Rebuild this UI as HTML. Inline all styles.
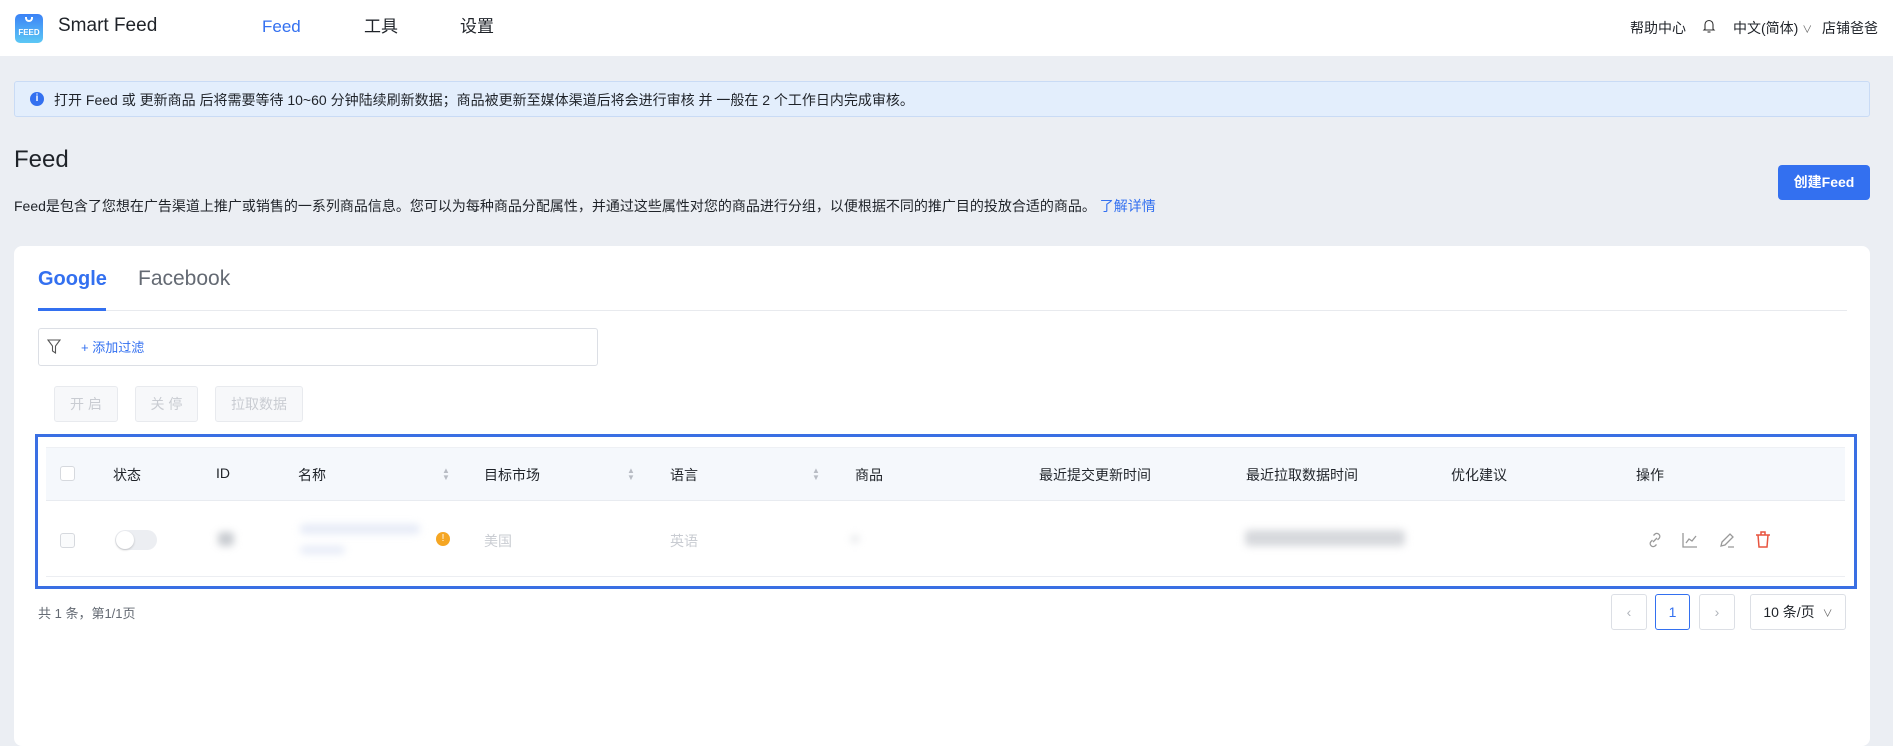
<!DOCTYPE html>
<html><head><meta charset="utf-8"><style>
*{box-sizing:border-box;margin:0;padding:0}
body{width:1893px;height:724px;overflow:hidden;background:#ebeef3;font-family:"Liberation Sans","Noto Sans CJK SC",sans-serif;color:#1f2329;position:relative}
.a{position:absolute;white-space:nowrap}
.hdr{left:0;top:0;width:1893px;height:56px;background:#fff}
.nav{top:14px;line-height:26px;font-size:17px}
.blur{background:#d8dbe0;filter:blur(4px);border-radius:4px}
.th{font-size:14px;color:#1f2329;top:465px}
.sort{font-size:8px;color:#b8bcc4;line-height:7px;top:467px}
.btn{border:1px solid #e8eaee;border-radius:3px;background:#f7f8fa;color:#c9ccd2;font-size:14px;top:386px;height:36px;display:flex;align-items:center;justify-content:center}
.pg{border:1px solid #dcdfe5;border-radius:3px;background:#fff;top:594px;height:36px;display:flex;align-items:center;justify-content:center;font-size:14px;color:#b0b4bb}
</style></head><body>
<div class="a hdr"></div>
<div class="a" style="left:15px;top:14px;width:28px;height:29px;border-radius:5px;background:linear-gradient(#3b82f6,#5cc8f5);color:#fff;font-size:8px;font-weight:bold;text-align:center;padding-top:14px">FEED</div>
<div class="a" style="left:25px;top:17px;width:8px;height:5px;border:2px solid #fff;border-top:none;border-radius:0 0 5px 5px"></div>
<div class="a nav" style="left:58px;font-size:19px;top:13px">Smart Feed</div>
<div class="a nav" style="left:262px;color:#3370f0">Feed</div>
<div class="a nav" style="left:364px">工具</div>
<div class="a nav" style="left:460px">设置</div>
<div class="a" style="left:1630px;top:18px;font-size:14px">帮助中心</div>
<svg class="a" style="left:1702px;top:18px" width="14" height="16" viewBox="0 0 14 16" fill="none" stroke="#333" stroke-width="1.1"><path d="M3 11V6.5a4 4 0 0 1 8 0V11l1 1H2z"/><path d="M5.5 14h3"/></svg>
<div class="a" style="left:1733px;top:18px;font-size:14px">中文(简体) <span style="font-size:10px;color:#666">∨</span></div>
<div class="a" style="left:1822px;top:18px;font-size:14px">店铺爸爸</div>

<div class="a" style="left:14px;top:81px;width:1856px;height:36px;background:#e3eefc;border:1px solid #c9dbf5;border-radius:3px"></div>
<div class="a" style="left:30px;top:92px;width:14px;height:14px;border-radius:50%;background:#3370f0;color:#fff;font-size:10px;text-align:center;line-height:14px;font-weight:bold">i</div>
<div class="a" style="left:54px;top:90px;font-size:14px">打开 Feed 或 更新商品 后将需要等待 10~60 分钟陆续刷新数据；商品被更新至媒体渠道后将会进行审核 并 一般在 2 个工作日内完成审核。</div>

<div class="a" style="left:14px;top:146px;font-size:24px">Feed</div>
<div class="a" style="left:14px;top:196px;font-size:14px">Feed是包含了您想在广告渠道上推广或销售的一系列商品信息。您可以为每种商品分配属性，并通过这些属性对您的商品进行分组，以便根据不同的推广目的投放合适的商品。 <span style="color:#3370f0">了解详情</span></div>
<div class="a" style="left:1778px;top:165px;width:92px;height:35px;background:#3370f0;border-radius:4px;color:#fff;font-size:14px;font-weight:bold;text-align:center;line-height:35px">创建Feed</div>

<div class="a" style="left:14px;top:246px;width:1856px;height:500px;background:#fff;border-radius:8px"></div>
<div class="a" style="left:38px;top:268px;font-size:20px;font-weight:bold;color:#3370f0">Google</div>
<div class="a" style="left:138px;top:267px;font-size:21px;color:#646a73">Facebook</div>
<div class="a" style="left:38px;top:310px;width:1809px;height:1px;background:#e8eaee"></div>
<div class="a" style="left:38px;top:308px;width:68px;height:3px;background:#3370f0"></div>

<div class="a" style="left:38px;top:328px;width:560px;height:38px;border:1px solid #dcdfe5;border-radius:3px"></div>
<svg class="a" style="left:47px;top:339px" width="14" height="16" viewBox="0 0 14 16" fill="none" stroke="#555" stroke-width="1.1"><path d="M1 1h12L8.5 7v7L5.5 12V7z"/></svg>
<div class="a" style="left:81px;top:337px;font-size:13px;color:#3370f0">+ 添加过滤</div>

<div class="a btn" style="left:54px;width:64px">开 启</div>
<div class="a btn" style="left:135px;width:63px">关 停</div>
<div class="a btn" style="left:215px;width:88px">拉取数据</div>

<div class="a" style="left:46px;top:447px;width:1799px;height:54px;background:#f5f8fc;border-top:1px solid #eef0f4;border-bottom:1px solid #e8ebf0"></div>
<div class="a" style="left:46px;top:576px;width:1799px;height:1px;background:#eceef2"></div>
<div class="a" style="left:35px;top:434px;width:1822px;height:155px;border:3px solid #3a6fe3"></div>

<div class="a" style="left:60px;top:466px;width:15px;height:15px;border:1px solid #d6d9de;border-radius:3px;background:#fff"></div>
<div class="a th" style="left:113px">状态</div>
<div class="a th" style="left:216px">ID</div>
<div class="a th" style="left:298px">名称</div>
<div class="a sort" style="left:442px">▲<br>▼</div>
<div class="a th" style="left:484px">目标市场</div>
<div class="a sort" style="left:627px">▲<br>▼</div>
<div class="a th" style="left:670px">语言</div>
<div class="a sort" style="left:812px">▲<br>▼</div>
<div class="a th" style="left:855px">商品</div>
<div class="a th" style="left:1039px">最近提交更新时间</div>
<div class="a th" style="left:1246px">最近拉取数据时间</div>
<div class="a th" style="left:1451px">优化建议</div>
<div class="a th" style="left:1636px">操作</div>

<div class="a" style="left:60px;top:533px;width:15px;height:15px;border:1px solid #d6d9de;border-radius:3px;background:#fafbfc"></div>
<div class="a" style="left:115px;top:530px;width:42px;height:20px;border-radius:10px;background:#eceef2"></div>
<div class="a" style="left:116px;top:531px;width:18px;height:18px;border-radius:50%;background:#fff;box-shadow:0 1px 2px rgba(0,0,0,.2)"></div>
<div class="a blur" style="left:218px;top:532px;width:16px;height:14px;background:#c8cbd0"></div>
<div class="a blur" style="left:300px;top:524px;width:120px;height:10px;background:#e6ebf7"></div>
<div class="a blur" style="left:300px;top:546px;width:45px;height:8px;background:#e6ebf7"></div>
<div class="a" style="left:436px;top:532px;width:14px;height:14px;border-radius:50%;background:#f5a623;color:#fff;font-size:10px;text-align:center;line-height:14px">!</div>
<div class="a" style="left:484px;top:531px;font-size:14px;color:#c9ccd2">美国</div>
<div class="a" style="left:670px;top:531px;font-size:14px;color:#c9ccd2">英语</div>
<div class="a blur" style="left:851px;top:535px;width:8px;height:8px;background:#e3e5e8"></div>
<div class="a blur" style="left:1245px;top:530px;width:160px;height:16px;background:#d6d8dc"></div>
<svg class="a" style="left:1646px;top:531px" width="18" height="18" viewBox="0 0 18 18" fill="none" stroke="#999" stroke-width="1.3"><path d="M7.5 4.5l1.5-1.5a3 3 0 0 1 4.2 4.2l-1.7 1.7M10.5 13.5l-1.5 1.5a3 3 0 0 1-4.2-4.2l1.7-1.7M7 11l4-4"/></svg>
<svg class="a" style="left:1681px;top:531px" width="18" height="18" viewBox="0 0 18 18" fill="none" stroke="#999" stroke-width="1.3"><path d="M2 2v14h14M5 12l3-4 3 2 4-5"/></svg>
<svg class="a" style="left:1718px;top:531px" width="18" height="18" viewBox="0 0 18 18" fill="none" stroke="#999" stroke-width="1.3"><path d="M3 15l1-4 8-8 3 3-8 8zM10 16h6"/></svg>
<svg class="a" style="left:1754px;top:530px" width="18" height="19" viewBox="0 0 18 19" fill="none" stroke="#e8543f" stroke-width="1.5"><path d="M2 5h14M7 5V2h4v3M4 5l1 12h8l1-12"/></svg>

<div class="a" style="left:38px;top:603px;font-size:13px;color:#646a73">共 1 条，第1/1页</div>
<div class="a pg" style="left:1611px;width:36px">‹</div>
<div class="a pg" style="left:1655px;width:35px;border-color:#3370f0;color:#3370f0">1</div>
<div class="a pg" style="left:1699px;width:36px">›</div>
<div class="a pg" style="left:1750px;width:96px;color:#1f2329">10 条/页 <span style="font-size:10px;margin-left:8px;color:#666">∨</span></div>
</body></html>
